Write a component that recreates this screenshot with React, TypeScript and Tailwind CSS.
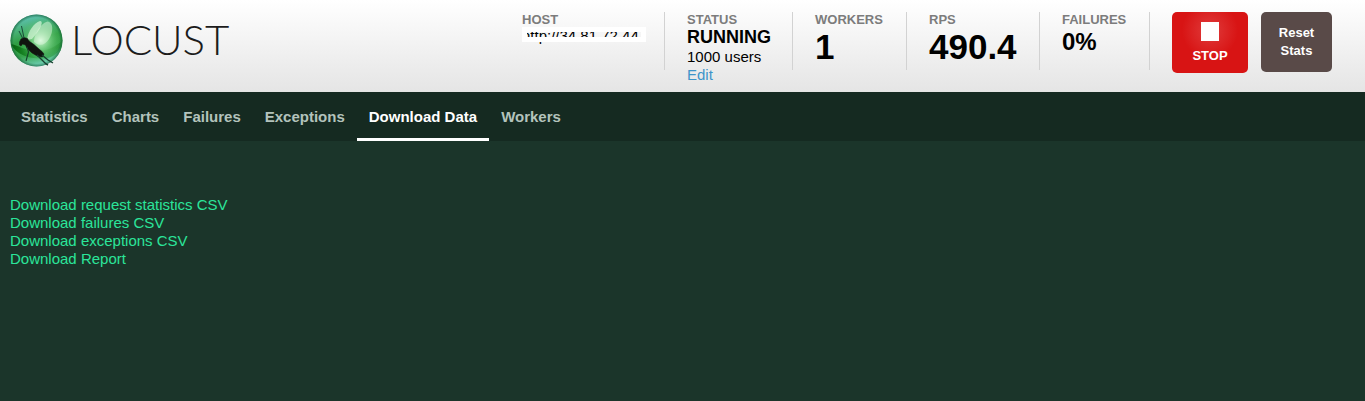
import type { ReactNode } from "react";

const tabs = ["Statistics", "Charts", "Failures", "Exceptions", "Download Data", "Workers"];
const downloads = [
  "Download request statistics CSV",
  "Download failures CSV",
  "Download exceptions CSV",
  "Download Report",
];

function Logo() {
  return (
    <a href="#" className="flex items-start gap-[7px] text-[#1c1c1c]" aria-label="Locust">
      <svg width="54" height="54" viewBox="0 0 54 54" aria-hidden="true">
        <defs>
          <linearGradient id="ball" x1="0.25" y1="0" x2="0.5" y2="1">
            <stop offset="0" stopColor="#62c4c0" />
            <stop offset="0.25" stopColor="#4bb37c" />
            <stop offset="0.5" stopColor="#2f9d42" />
            <stop offset="0.75" stopColor="#35a24a" />
            <stop offset="1" stopColor="#74d2bc" />
          </linearGradient>
          <radialGradient id="glow" cx="0.58" cy="0.5" r="0.42">
            <stop offset="0" stopColor="#e2ffe4" stopOpacity="0.95" />
            <stop offset="0.4" stopColor="#9be8a4" stopOpacity="0.6" />
            <stop offset="1" stopColor="#4cbb5c" stopOpacity="0" />
          </radialGradient>
          <linearGradient id="ground" x1="0" y1="0" x2="1" y2="0">
            <stop offset="0" stopColor="#04600c" />
            <stop offset="0.5" stopColor="#128a1b" stopOpacity="0.4" />
            <stop offset="1" stopColor="#107a1c" stopOpacity="0.4" />
          </linearGradient>
          <radialGradient id="rim" cx="0.5" cy="0.5" r="0.5">
            <stop offset="0.88" stopColor="#16603a" stopOpacity="0" />
            <stop offset="1" stopColor="#16603a" stopOpacity="0.7" />
          </radialGradient>
        </defs>
        <circle cx="26.5" cy="26.5" r="26" fill="url(#ball)" />
        <path d="M1 30C9 32 15 36 24 37C34 38 44 34 52 27C51 36 46 42 38 44C25 46 7 43 1 30Z" fill="url(#ground)" />
        <circle cx="26.5" cy="26.5" r="26" fill="url(#glow)" />
        <path d="M17 26C18 17 24 9 30 7C34 7 31 15 22 25Z" fill="#e2fae2" fillOpacity="0.65" />
        <path d="M24 28C24 19 32 8 38 7.500C44 9 43 19 39 25C35 31 30 33 24 28Z" fill="#e2fae2" fillOpacity="0.5" />
        <circle cx="26.5" cy="26.5" r="26" fill="url(#rim)" />
        <path d="M9.500 31L9.500 28L11 25L14 23.500L17.500 24.500L19 27L24 30.500L29 35L32 37.500L34 40L32.500 43L28 42.500L22 39L17 34.500L15.500 31L12.500 30L11 32Z" fill="#10140f" stroke="#10140f" strokeWidth="0.500" />
        <path d="M12.500 24L9 17M14 24L11.500 12" stroke="#184a38" strokeWidth="1" fill="none" />
        <path d="M17 33L18.500 38L16 47" stroke="#16402a" strokeWidth="1.100" fill="none" />
        <path d="M27 41L36 50L38 51M32 41L38 46L43 49" stroke="#17402f" strokeWidth="1.400" fill="none" />
      </svg>
      <span className="font-[Lato,sans-serif] text-[42px] leading-[50px] font-light">LOCUST</span>
    </a>
  );
}

function Stat({ label, width, children }: { label: string; width: string; children: ReactNode }) {
  return (
    <div className={`h-[58px] shrink-0 border-r border-[#d2d2d2] pl-[22px] ${width}`}>
      <div className="text-[13px] leading-4 font-bold text-[#7c7c7c]">{label}</div>
      {children}
    </div>
  );
}

export default function App() {
  return (
    <div className="min-h-screen bg-[#1b352a] font-['Liberation_Sans',Arial,sans-serif] text-[15px] leading-[18px] text-black">
      <header className="flex h-[92px] items-start justify-between bg-linear-to-b from-white to-[#e5e5e5] pr-[33px] pl-[10px]">
        <div className="pt-[14px]">
          <Logo />
        </div>
        <div className="flex items-start pt-3">
          <Stat label="HOST" width="w-[165px]">
            <div className="relative -mt-px w-[124px] whitespace-nowrap">
              http://34.81.72.44
              <span className="absolute top-0 left-0 h-[5px] w-full bg-white" />
              <span className="absolute top-[10px] left-0 h-[5px] w-full bg-white" />
              <span className="absolute top-[5px] left-0 h-[5px] w-[5px] bg-white" />
              <span className="absolute top-[5px] right-0 h-[5px] w-[5px] bg-white" />
            </div>
          </Stat>
          <Stat label="STATUS" width="w-[128px]">
            <div className="mb-0.5 text-[18px] leading-[18px] font-bold">RUNNING</div>
            <div>1000 users</div>
            <a href="#edit" className="block text-[#3d94c9]">Edit</a>
          </Stat>
          <Stat label="WORKERS" width="w-[114px]">
            <div className="text-[35px] leading-[38px] font-bold">1</div>
          </Stat>
          <Stat label="RPS" width="w-[133px]">
            <div className="text-[35px] leading-[38px] font-bold">490.4</div>
          </Stat>
          <Stat label="FAILURES" width="w-[110px]">
            <div className="text-[24px] leading-[28px] font-bold">0%</div>
          </Stat>
          <button className="ml-[22px] flex h-[61px] w-[76px] flex-col items-center rounded-[5px] bg-[radial-gradient(circle_at_50%_30%,#e03c3c_0,#d81414_28px)] pt-[10px] text-[13px] font-bold text-white">
            <span className="mb-1.5 h-[19px] w-[18px] bg-white" />
            STOP
          </button>
          <button className="ml-[13px] h-[60px] w-[71px] rounded-[5px] bg-[#594a48] px-4 text-[13px] leading-[18px] font-bold text-white">
            Reset Stats
          </button>
        </div>
      </header>
      <nav className="flex h-[49px] bg-[#152a21] pl-[9px]">
        {tabs.map((tab) => (
          <a
            key={tab}
            href="#"
            className={`border-b-[3px] px-3 pt-4 font-bold ${tab === "Download Data" ? "border-white text-white" : "border-transparent text-[#b3c3bc]"}`}
          >
            {tab}
          </a>
        ))}
      </nav>
      <main className="px-[10px] pt-[55px]">
        <ul>
          {downloads.map((item) => (
            <li key={item}>
              <a href="#" className="text-[#2be59a]">{item}</a>
            </li>
          ))}
        </ul>
      </main>
    </div>
  );
}
